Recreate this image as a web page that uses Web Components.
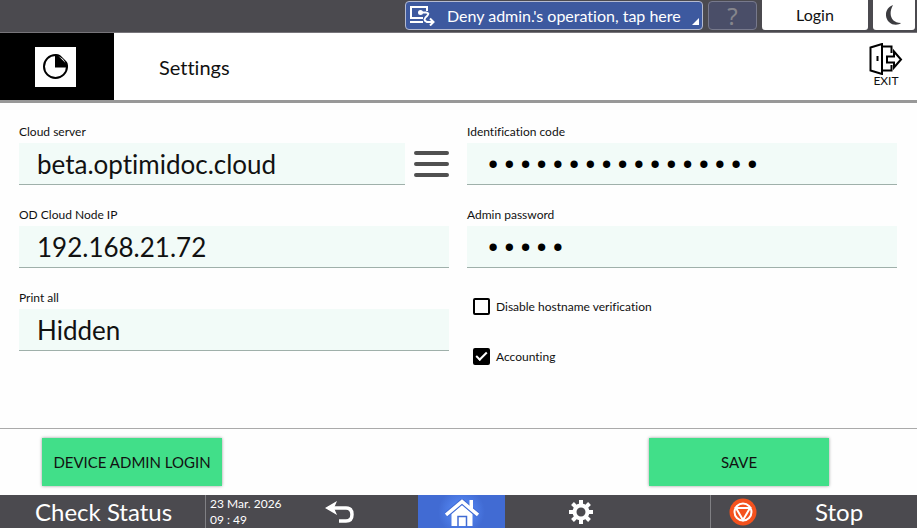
<!DOCTYPE html>
<html lang="en">
<head>
<meta charset="utf-8">
<meta name="viewport" content="width=device-width, initial-scale=1">
<title>Settings</title>
<style>
    body {
        margin: 0;
        font-family: Lato, "Noto Sans", sans-serif;
        font-variant-ligatures: none;
        color: #111;
        background: #fefefe;
    }
</style>
</head>
<body>
<device-panel></device-panel>

<script>
class StatusBar extends HTMLElement {
    constructor() {
        super()
        const shadowRoot = this.attachShadow({ mode: 'open' })
        shadowRoot.innerHTML = `
            <style>
                :host{
                    display:flex;
                    justify-content:flex-end;
                    gap:5px;
                    height:33px;
                    padding-right:2px;
                    box-sizing:border-box;
                    background:#4b4a4f;
                    border-bottom:1px solid #77757a;
                }
                button{
                    box-sizing:border-box;
                    height:29px;
                    margin:1px 0 0;
                    padding:0;
                    border:1px solid #77798c;
                    border-radius:4px;
                    font-family:inherit;
                    font-variant-ligatures:none;
                    font-size:16px;
                    line-height:24px;
                    white-space:nowrap;
                    color:#fff;
                }
                svg{ display:block; }
                .notice{
                    position:relative;
                    display:flex;
                    align-items:center;
                    gap:11px;
                    width:298px;
                    padding-left:4px;
                    background:#3d599f;
                    border-color:#b4bad0;
                }
                .notice::after{
                    content:"";
                    position:absolute;
                    right:3px;
                    bottom:4px;
                    border-left:7px solid transparent;
                    border-bottom:7px solid #fff;
                }
                .help{
                    width:49px;
                    background:#4a4e68;
                    color:#85858c;
                    font-family:"Noto Sans", sans-serif;
                    font-size:24px;
                }
                .login, .sleep{
                    height:30px;
                    margin:0;
                    background:#fff;
                    color:#111;
                    border:0;
                    border-radius:0 0 3px 3px;
                }
                .login{ width:106px; }
                .sleep{
                    width:42px;
                    display:grid;
                    place-items:center;
                }
            </style>
            <button class="notice">
                <svg width="26" height="20" viewBox="0 0 26 20" fill="none" stroke="#fff" stroke-width="2">
                    <path d="M17 5V1H1V12H13M0 16H13"/>
                    <path d="M11 6.500H16Q20 7 17 10Q12 14 17 16H23M20 12.500L23.500 16L20 19.500"/>
                    <circle cx="10.500" cy="6.500" r="2.500" fill="#fff" stroke="none"/>
                </svg>
                <span>Deny admin.'s operation, tap here</span>
            </button>
            <button class="help">?</button>
            <button class="login">Login</button>
            <button class="sleep" aria-label="Sleep">
                <svg width="16" height="20" viewBox="0 0 16 20">
                    <path d="M7 0C-1 3-2 12 3 17C7 21 13 20 15 18C5 18 2 9 7 0Z" fill="#3c3c40"/>
                </svg>
            </button>
        `
    }
}

class AppHeader extends HTMLElement {
    constructor() {
        super()
        const shadowRoot = this.attachShadow({ mode: 'open' })
        shadowRoot.innerHTML = `
            <style>
                :host{
                    display:flex;
                    align-items:center;
                    height:67px;
                    background:#fff;
                    border-bottom:3px solid #989898;
                }
                .logo{
                    display:grid;
                    place-items:center;
                    align-self:stretch;
                    width:114px;
                    box-sizing:border-box;
                    padding-right:4px;
                    background:#000;
                }
                .logo svg{ background:#fff; }
                h1{
                    flex:1;
                    margin:0 0 0 45px;
                    font-size:20px;
                    font-weight:400;
                }
                .exit{
                    display:flex;
                    flex-direction:column;
                    align-items:center;
                    margin:0 14px 4px 0;
                    padding:0;
                    border:0;
                    background:none;
                    font-family:inherit;
                    font-size:12px;
                    line-height:12px;
                    color:#111;
                }
            </style>
            <div class="logo">
                <svg width="41" height="40" viewBox="0 0 41 40">
                    <circle cx="20.500" cy="19.500" r="11.500" fill="none" stroke="#000" stroke-width="2"/>
                    <path d="M22 5L36 19V5Z" fill="#fff"/>
                    <path d="M20 7.500H22L33 18.500V20.500H20Z"/>
                </svg>
            </div>
            <h1><slot></slot></h1>
            <button class="exit">
                <svg width="34" height="32" viewBox="0 0 34 32" fill="none" stroke="#000" stroke-width="2">
                    <path d="M1.500 4.500L13 1V31L1.500 27.500ZM8.500 13V18M13 3.500H22.500V10M13 27.500H22.500V22"/>
                    <path d="M18 13.500H25V8.500L32 16.500L25 24.500V19.500H18Z"/>
                </svg>
                EXIT
            </button>
        `
    }
}

// Labelled field; type is text, password or select
class FormField extends HTMLElement {
    constructor() {
        super()
        this.attachShadow({ mode: 'open' })
    }

    connectedCallback() {
        const type = this.getAttribute('type') || 'text'
        const value = this.getAttribute('value') || ''
        const control = type === 'select'
            ? `<select id="control"><option>${value}</option></select>`
            : `<input id="control" type="${type}" value="${value}">`
        this.shadowRoot.innerHTML = `
            <style>
                :host{ display:block; }
                label{
                    display:block;
                    height:20px;
                    font-size:12px;
                    line-height:18px;
                }
                .row{
                    display:flex;
                    align-items:center;
                    gap:9px;
                }
                input, select{
                    flex:1;
                    min-width:0;
                    height:42px;
                    box-sizing:border-box;
                    margin:0;
                    padding:0 18px;
                    border:0;
                    border-bottom:1px solid #9fb0aa;
                    border-radius:0;
                    outline:0;
                    appearance:none;
                    background:#f2fbf8;
                    color:#111;
                    font-family:inherit;
                    font-variant-ligatures:none;
                    font-size:26px;
                }
                input[type=password]{
                    padding-top:4px;
                    color:#000;
                    font:27px "Liberation Mono", monospace;
                }
            </style>
            <label for="control">${this.getAttribute('label')}</label>
            <div class="row">${control}<slot></slot></div>
        `
    }
}

class MenuButton extends HTMLElement {
    constructor() {
        super()
        const shadowRoot = this.attachShadow({ mode: 'open' })
        shadowRoot.innerHTML = `
            <style>
                :host{ display:block; }
                button{
                    display:block;
                    padding:0;
                    border:0;
                    background:none;
                }
                svg{ display:block; }
            </style>
            <button aria-label="Servers">
                <svg width="35" height="26" viewBox="0 0 35 26" stroke="#505050" stroke-width="4" stroke-linecap="round">
                    <path d="M2 2H33M2 13H33M2 24H33"/>
                </svg>
            </button>
        `
    }
}

class CheckOption extends HTMLElement {
    constructor() {
        super()
        const shadowRoot = this.attachShadow({ mode: 'open' })
        shadowRoot.innerHTML = `
            <style>
                :host{ display:block; }
                label{
                    display:flex;
                    align-items:center;
                    gap:6px;
                    height:34px;
                    font-size:12px;
                }
                input{
                    appearance:none;
                    display:grid;
                    width:17px;
                    height:17px;
                    box-sizing:border-box;
                    margin:0;
                    border:2px solid #000;
                    border-radius:2px;
                }
                input:checked{ background:#000; }
                input:checked::before{
                    content:"";
                    place-self:center;
                    width:9px;
                    height:4px;
                    margin-bottom:3px;
                    border:solid #fff;
                    border-width:0 0 2px 2px;
                    transform:rotate(-45deg);
                }
            </style>
            <label><input type="checkbox"><slot></slot></label>
        `
    }

    connectedCallback() {
        this.shadowRoot.querySelector('input').checked = this.hasAttribute('checked')
    }
}

class ActionButton extends HTMLElement {
    constructor() {
        super()
        const shadowRoot = this.attachShadow({ mode: 'open' })
        shadowRoot.innerHTML = `
            <style>
                :host{ display:block; }
                button{
                    display:block;
                    width:180px;
                    height:48px;
                    padding:0;
                    border:0;
                    background:#41df89;
                    box-shadow:0 0 3px #999;
                    font-family:inherit;
                    font-size:15px;
                    white-space:nowrap;
                    color:#111;
                }
            </style>
            <button><slot></slot></button>
        `
    }
}

class SystemBar extends HTMLElement {
    constructor() {
        super()
        const shadowRoot = this.attachShadow({ mode: 'open' })
        shadowRoot.innerHTML = `
            <style>
                :host{
                    display:grid;
                    grid-template-columns:205fr 95fr 118fr 87fr 205fr 207fr;
                    height:33px;
                    background:#4b4a4f;
                    color:#fff;
                }
                button{
                    display:flex;
                    align-items:center;
                    min-width:0;
                    padding:0;
                    border:0;
                    background:none;
                    color:#fff;
                    font-family:inherit;
                    font-size:24px;
                    line-height:32px;
                    white-space:nowrap;
                }
                .check{ padding-left:35px; }
                time{
                    display:grid;
                    align-content:center;
                    min-width:0;
                    border-left:1px solid #808084;
                    padding-left:4px;
                    font-size:12px;
                    line-height:16px;
                    white-space:nowrap;
                }
                .back{ padding-left:25px; }
                .home{
                    justify-content:center;
                    align-items:flex-end;
                    background:radial-gradient(circle, #5c91ff, #416bd3 50%);
                }
                .gear{ padding-left:64px; }
                .stop{
                    gap:58px;
                    padding-left:18px;
                    border-left:1px solid #808084;
                }
            </style>
            <button class="check">Check Status</button>
            <time datetime="2026-03-23T09:49"><span>23 Mar. 2026</span><span>09 : 49</span></time>
            <button class="back" aria-label="Back">
                <svg width="30" height="24" viewBox="0 0 30 24" fill="none" stroke="#fff" stroke-width="3.500">
                    <path d="M3 8H21Q27 8 27 14.500Q27 21 21 21H14"/>
                    <path d="M0 8L12 1L9 8L12 15Z" fill="#fff" stroke="none"/>
                </svg>
            </button>
            <button class="home" aria-label="Home">
                <svg width="34" height="29" viewBox="0 0 34 29">
                    <path d="M6.500 15L17 6L27.500 15V27H6.500Z" fill="#fff"/>
                    <path d="M13 27.500V17.500H21.500V27.500" fill="none" stroke="#416bd3" stroke-width="1.500"/>
                    <path d="M1 16L17 2.500L33 16" fill="none" stroke="#416bd3" stroke-width="5.500"/>
                    <path d="M1 16L17 2.500L33 16" fill="none" stroke="#fff" stroke-width="3.500"/>
                    <path d="M24.500 1H28V11L24.500 8Z" fill="#fff"/>
                </svg>
            </button>
            <button class="gear" aria-label="Settings">
                <svg width="24" height="24" viewBox="-12 -12 24 24" stroke="#fff">
                    <circle r="6.500" fill="none" stroke-width="4"/>
                    <path d="M0-12V-7M0 12V7M-12 0H-7M12 0H7M-8.500-8.500L-5-5M8.500 8.500L5 5M-8.500 8.500L-5 5M8.500-8.500L5-5" stroke-width="4"/>
                </svg>
            </button>
            <button class="stop">
                <svg width="28" height="28" viewBox="-14 -14 28 28" fill="none" stroke="#fff" stroke-width="2">
                    <circle r="13.500" fill="#f4521e" stroke="none"/>
                    <circle r="8.500"/>
                    <path d="M-7-4H7L0 8Z"/>
                </svg>
                <span>Stop</span>
            </button>
        `
    }
}

class DevicePanel extends HTMLElement {
    constructor() {
        super()
        const shadowRoot = this.attachShadow({ mode: 'open' })
        shadowRoot.innerHTML = `
            <style>
                :host{
                    display:flex;
                    flex-direction:column;
                    min-height:100vh;
                }
                main{
                    flex:1;
                    display:grid;
                    grid-template-columns:minmax(0, 1fr) minmax(0, 1fr);
                    align-content:start;
                    gap:21px 18px;
                    padding:20px 20px 20px 19px;
                }
                .options{
                    display:grid;
                    gap:16px;
                    height:62px;
                    padding-left:6px;
                }
                footer{
                    display:flex;
                    justify-content:space-between;
                    padding:9px 88px 9px 42px;
                    border-top:1px solid #aaa;
                }
            </style>
            <status-bar></status-bar>
            <app-header>Settings</app-header>
            <main>
                <form-field label="Cloud server" value="beta.optimidoc.cloud"><menu-button></menu-button></form-field>
                <form-field label="Identification code" type="password" value="12345678901234567"></form-field>
                <form-field label="OD Cloud Node IP" value="192.168.21.72"></form-field>
                <form-field label="Admin password" type="password" value="12345"></form-field>
                <form-field label="Print all" type="select" value="Hidden"></form-field>
                <div class="options">
                    <check-option>Disable hostname verification</check-option>
                    <check-option checked>Accounting</check-option>
                </div>
            </main>
            <footer>
                <action-button>DEVICE ADMIN LOGIN</action-button>
                <action-button>SAVE</action-button>
            </footer>
            <system-bar></system-bar>
        `
    }
}

customElements.define('status-bar', StatusBar);
customElements.define('app-header', AppHeader);
customElements.define('form-field', FormField);
customElements.define('menu-button', MenuButton);
customElements.define('check-option', CheckOption);
customElements.define('action-button', ActionButton);
customElements.define('system-bar', SystemBar);
customElements.define('device-panel', DevicePanel);
</script>
</body>
</html>
